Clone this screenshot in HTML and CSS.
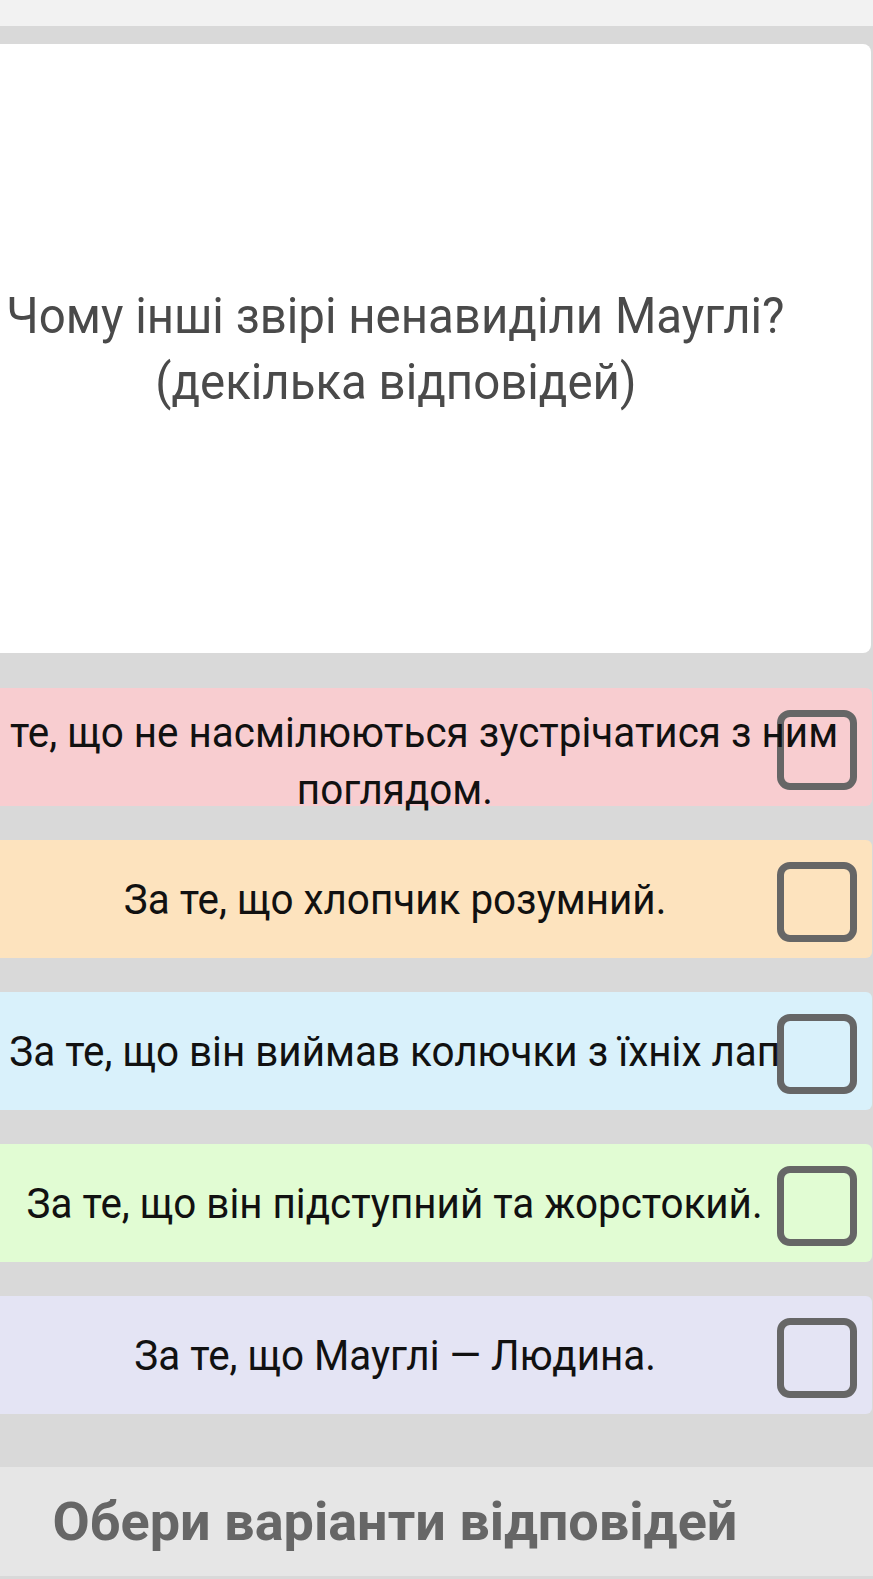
FILE: index.html
```html
<!DOCTYPE html>
<html lang="uk">
<head>
<meta charset="utf-8">
<title>Тест</title>
<link rel="stylesheet" href="styles.css">
</head>
<body>
<div class="topbar"></div>
<main class="page">
  <section class="question">
    <div class="q-text">
      <span class="line">Чому інші звірі ненавиділи Мауглі?</span>
      <span class="line">(декілька відповідей)</span>
    </div>
  </section>
  <ul class="options">
    <li class="option pink">
      <div class="opt-text two-lines"><span class="line first">те, що не насмілюються зустрічатися з ним</span><span class="line">поглядом.</span></div>
      <span class="check"></span>
    </li>
    <li class="option orange">
      <div class="opt-text"><span class="line">За те, що хлопчик розумний.</span></div>
      <span class="check"></span>
    </li>
    <li class="option blue">
      <div class="opt-text"><span class="line">За те, що він виймав колючки з їхніх лап</span></div>
      <span class="check"></span>
    </li>
    <li class="option green">
      <div class="opt-text"><span class="line">За те, що він підступний та жорстокий.</span></div>
      <span class="check"></span>
    </li>
    <li class="option lavender">
      <div class="opt-text"><span class="line">За те, що Мауглі — Людина.</span></div>
      <span class="check"></span>
    </li>
  </ul>
  <footer class="bottom">
    <span class="bottom-text">Обери варіанти відповідей</span>
  </footer>
</main>
</body>
</html>
```

FILE: styles.css
```css
html, body {
  margin: 0;
  padding: 0;
}
body {
  background: #d9d9d9;
  font-family: Roboto, "Noto Sans", sans-serif;
  width: 873px;
  height: 1579px;
  overflow: hidden;
}
.topbar {
  height: 26px;
  background: #f2f2f2;
}
.page {
  padding-top: 18px;
  display: flex;
  flex-direction: column;
}
.question {
  height: 609px;
  background: #ffffff;
  margin-left: -12px;
  margin-right: 2px;
  border-radius: 0 8px 8px 0;
  display: flex;
  align-items: center;
}
.q-text {
  width: 803px;
  display: flex;
  flex-direction: column;
  align-items: center;
  color: #4a4a4a;
  font-size: 50px;
  line-height: 66px;
  padding-left: 12px;
  box-sizing: border-box;
}
.q-text .line {
  transform: scaleX(0.948);
}
.line {
  white-space: nowrap;
}
.options {
  list-style: none;
  margin: 0;
  padding: 35px 0 0 0;
  display: flex;
  flex-direction: column;
  gap: 34px;
}
.option {
  height: 118px;
  margin-left: -12px;
  margin-right: 1px;
  border-radius: 0 6px 6px 0;
  display: flex;
  align-items: center;
}
.pink { background: #f8cdd0; }
.orange { background: #fde3be; }
.blue { background: #d9f1fb; }
.green { background: #e1fcd3; }
.lavender { background: #e4e4f4; }
.opt-text {
  width: 802px;
  padding-left: 12px;
  box-sizing: border-box;
  flex: none;
  display: flex;
  flex-direction: column;
  align-items: center;
  color: #111111;
  font-size: 42px;
  line-height: 57px;
}
.opt-text .line {
  transform: scaleX(0.962);
}
.opt-text .line.first {
  align-self: flex-start;
  margin-left: 10px;
  transform-origin: left center;
}
.opt-text.two-lines {
  align-self: flex-start;
  margin-top: 16px;
}
.check {
  flex: none;
  width: 80px;
  height: 80px;
  box-sizing: border-box;
  border: 7px solid #666666;
  border-radius: 13px;
  margin-left: -13px;
  margin-top: 6px;
}
.bottom {
  margin-top: 53px;
  height: 109px;
  background: #e6e6e6;
  display: flex;
  align-items: center;
  justify-content: center;
  padding-right: 83px;
}
.bottom-text {
  font-weight: bold;
  font-size: 54px;
  color: #666666;
}
```
